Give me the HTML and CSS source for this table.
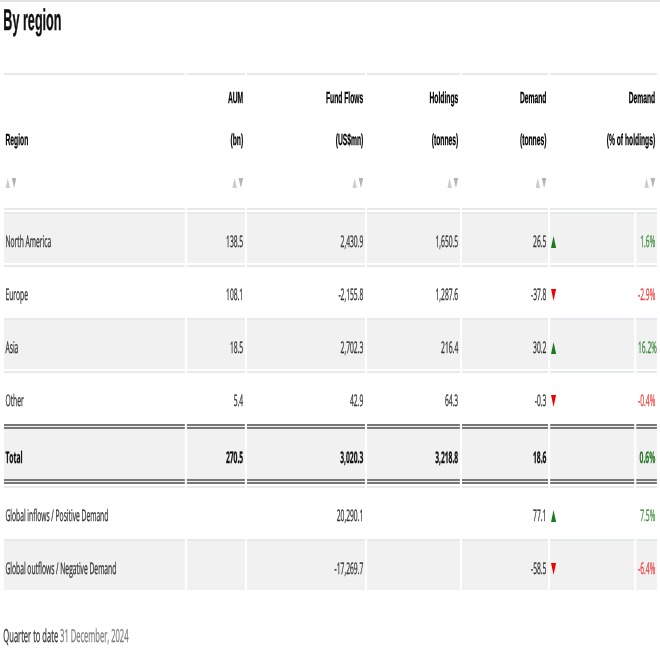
FILE: index.html
```html
<!DOCTYPE html>
<html lang="en">
<head>
<meta charset="utf-8">
<title>By region</title>
<link rel="stylesheet" href="styles.css">
</head>
<body>
<div class="viewport">
<div class="page">
  <h2 class="title">By region</h2>
  <table class="grid">
    <colgroup>
      <col class="c-region">
      <col class="c-aum">
      <col class="c-flows">
      <col class="c-hold">
      <col class="c-dem">
      <col class="c-dir">
      <col class="c-pct">
    </colgroup>
    <thead>
      <tr>
        <th class="left">Region<br><svg class="sort" viewBox="0 0 26 10" width="26" height="10"><polygon class="s-up" points="0,10 5.5,0 11,10"/><polygon class="s-dn" points="15,0 26,0 20.5,10"/></svg></th>
        <th>AUM<br>(bn)<br><svg class="sort" viewBox="0 0 26 10" width="26" height="10"><polygon class="s-up" points="0,10 5.5,0 11,10"/><polygon class="s-dn" points="15,0 26,0 20.5,10"/></svg></th>
        <th>Fund Flows<br>(US$mn)<br><svg class="sort" viewBox="0 0 26 10" width="26" height="10"><polygon class="s-up" points="0,10 5.5,0 11,10"/><polygon class="s-dn" points="15,0 26,0 20.5,10"/></svg></th>
        <th>Holdings<br>(tonnes)<br><svg class="sort" viewBox="0 0 26 10" width="26" height="10"><polygon class="s-up" points="0,10 5.5,0 11,10"/><polygon class="s-dn" points="15,0 26,0 20.5,10"/></svg></th>
        <th>Demand<br>(tonnes)<br><svg class="sort" viewBox="0 0 26 10" width="26" height="10"><polygon class="s-up" points="0,10 5.5,0 11,10"/><polygon class="s-dn" points="15,0 26,0 20.5,10"/></svg></th>
        <th colspan="2">Demand<br>(% of holdings)<br><svg class="sort" viewBox="0 0 26 10" width="26" height="10"><polygon class="s-up" points="0,10 5.5,0 11,10"/><polygon class="s-dn" points="15,0 26,0 20.5,10"/></svg></th>
      </tr>
    </thead>
    <tbody>
      <tr class="shade">
        <td class="name">North America</td><td>138.5</td><td>2,430.9</td><td>1,650.5</td><td>26.5</td>
        <td class="dir"><svg class="tri" viewBox="0 0 12 12" width="12" height="12"><polygon class="t-up" points="0,12 6,0 12,12"/></svg></td>
        <td class="pct up">1.6%</td>
      </tr>
      <tr>
        <td class="name">Europe</td><td>108.1</td><td>-2,155.8</td><td>1,287.6</td><td>-37.8</td>
        <td class="dir"><svg class="tri" viewBox="0 0 12 12" width="12" height="12"><polygon class="t-dn" points="0,0 12,0 6,12"/></svg></td>
        <td class="pct down">-2.9%</td>
      </tr>
      <tr class="shade">
        <td class="name">Asia</td><td>18.5</td><td>2,702.3</td><td>216.4</td><td>30.2</td>
        <td class="dir"><svg class="tri" viewBox="0 0 12 12" width="12" height="12"><polygon class="t-up" points="0,12 6,0 12,12"/></svg></td>
        <td class="pct up">16.2%</td>
      </tr>
      <tr>
        <td class="name">Other</td><td>5.4</td><td>42.9</td><td>64.3</td><td>-0.3</td>
        <td class="dir"><svg class="tri" viewBox="0 0 12 12" width="12" height="12"><polygon class="t-dn" points="0,0 12,0 6,12"/></svg></td>
        <td class="pct down">-0.4%</td>
      </tr>
      <tr class="shade total">
        <td class="name">Total</td><td>270.5</td><td>3,020.3</td><td>3,218.8</td><td>18.6</td>
        <td class="dir"></td>
        <td class="pct up">0.6%</td>
      </tr>
      <tr>
        <td class="name">Global inflows / Positive Demand</td><td></td><td>20,290.1</td><td></td><td>77.1</td>
        <td class="dir"><svg class="tri" viewBox="0 0 12 12" width="12" height="12"><polygon class="t-up" points="0,12 6,0 12,12"/></svg></td>
        <td class="pct up">7.5%</td>
      </tr>
      <tr class="shade">
        <td class="name">Global outflows / Negative Demand</td><td></td><td>-17,269.7</td><td></td><td>-58.5</td>
        <td class="dir"><svg class="tri" viewBox="0 0 12 12" width="12" height="12"><polygon class="t-dn" points="0,0 12,0 6,12"/></svg></td>
        <td class="pct down">-6.4%</td>
      </tr>
    </tbody>
  </table>
  <p class="footer">Quarter to date <span class="date">31 December, 2024</span></p>
</div>
</div>
</body>
</html>
```
FILE: styles.css
```css
html, body {
  margin: 0;
  padding: 0;
  background: #fff;
  overflow: hidden;
}

.viewport {
  width: 660px;
  height: 660px;
  overflow: hidden;
}

.page {
  width: 1572px;
  box-sizing: border-box;
  padding: 0 3px 0 4px;
  border-top: 2px solid #e2e2e2;
  transform: scaleX(0.42);
  transform-origin: 0 0;
  font-family: "Open Sans", "Liberation Sans", sans-serif;
  color: #333;
  text-rendering: geometricPrecision;
}

.title {
  margin: 2px 0 0 4px;
  font: bold 30px/34px "Liberation Sans", Arial, sans-serif;
  color: #111;
  -webkit-text-stroke: 0.4px #111;
}

.grid {
  width: 100%;
  table-layout: fixed;
  border-collapse: separate;
  border-spacing: 5px 2px;
  margin-top: 33px;
}

.c-region { width: 431px; }
.c-aum { width: 138px; }
.c-flows { width: 281px; }
.c-hold { width: 221px; }
.c-dem { width: 205px; }
.c-dir { width: 200px; }
.c-pct { width: 49px; }

.grid th {
  font: bold 16px/42px "Liberation Sans", Arial, sans-serif;
  color: #000;
  text-align: right;
  vertical-align: bottom;
  padding: 3px 4px 4px;
  border-top: 2px solid #e6e9ec;
  border-bottom: 2px solid #e6e9ec;
  white-space: nowrap;
  -webkit-text-stroke: 0.3px #000;
}

.grid th.left {
  text-align: left;
}

.title,
.footer,
.grid th,
.grid td.name,
.grid td.num {
  filter: grayscale(1);
}

.sort {
  display: inline-block;
  vertical-align: middle;
}

.s-up { fill: #cdcdcd; }
.s-dn { fill: #b4b4b4; }

.grid td {
  height: 44px;
  padding: 5px 4px 0;
  border-top: 2px solid #e6e9ec;
  font-size: 16px;
  color: #333;
  text-align: right;
  vertical-align: middle;
  white-space: nowrap;
  -webkit-text-stroke: 0.35px currentColor;
}

.grid td:not(.pct):not(.dir) {
  filter: grayscale(1);
}

.grid tr.shade td {
  background: #f1f1f1;
}

.grid td.name {
  text-align: left;
}

.grid td.dir {
  text-align: left;
  padding-left: 2px;
}

.tri {
  display: inline-block;
  vertical-align: -1px;
}

.t-up { fill: #1b7a1b; }
.t-dn { fill: #f20000; }

.grid td.pct.up { color: #3b8c3b; }
.grid td.pct.down { color: #f23a3a; }

.grid tr.total td {
  height: 45px;
  border-top: 5px double #777;
  border-bottom: 5px double #777;
  font-weight: bold;
  color: #111;
}

.grid tr.total td.pct.up {
  color: #2a7a2a;
}

.footer {
  margin: 32px 0 0 4px;
  font-size: 18px;
  color: #333;
  -webkit-text-stroke: 0.3px currentColor;
}

.date {
  color: #7a7a7a;
}
```
